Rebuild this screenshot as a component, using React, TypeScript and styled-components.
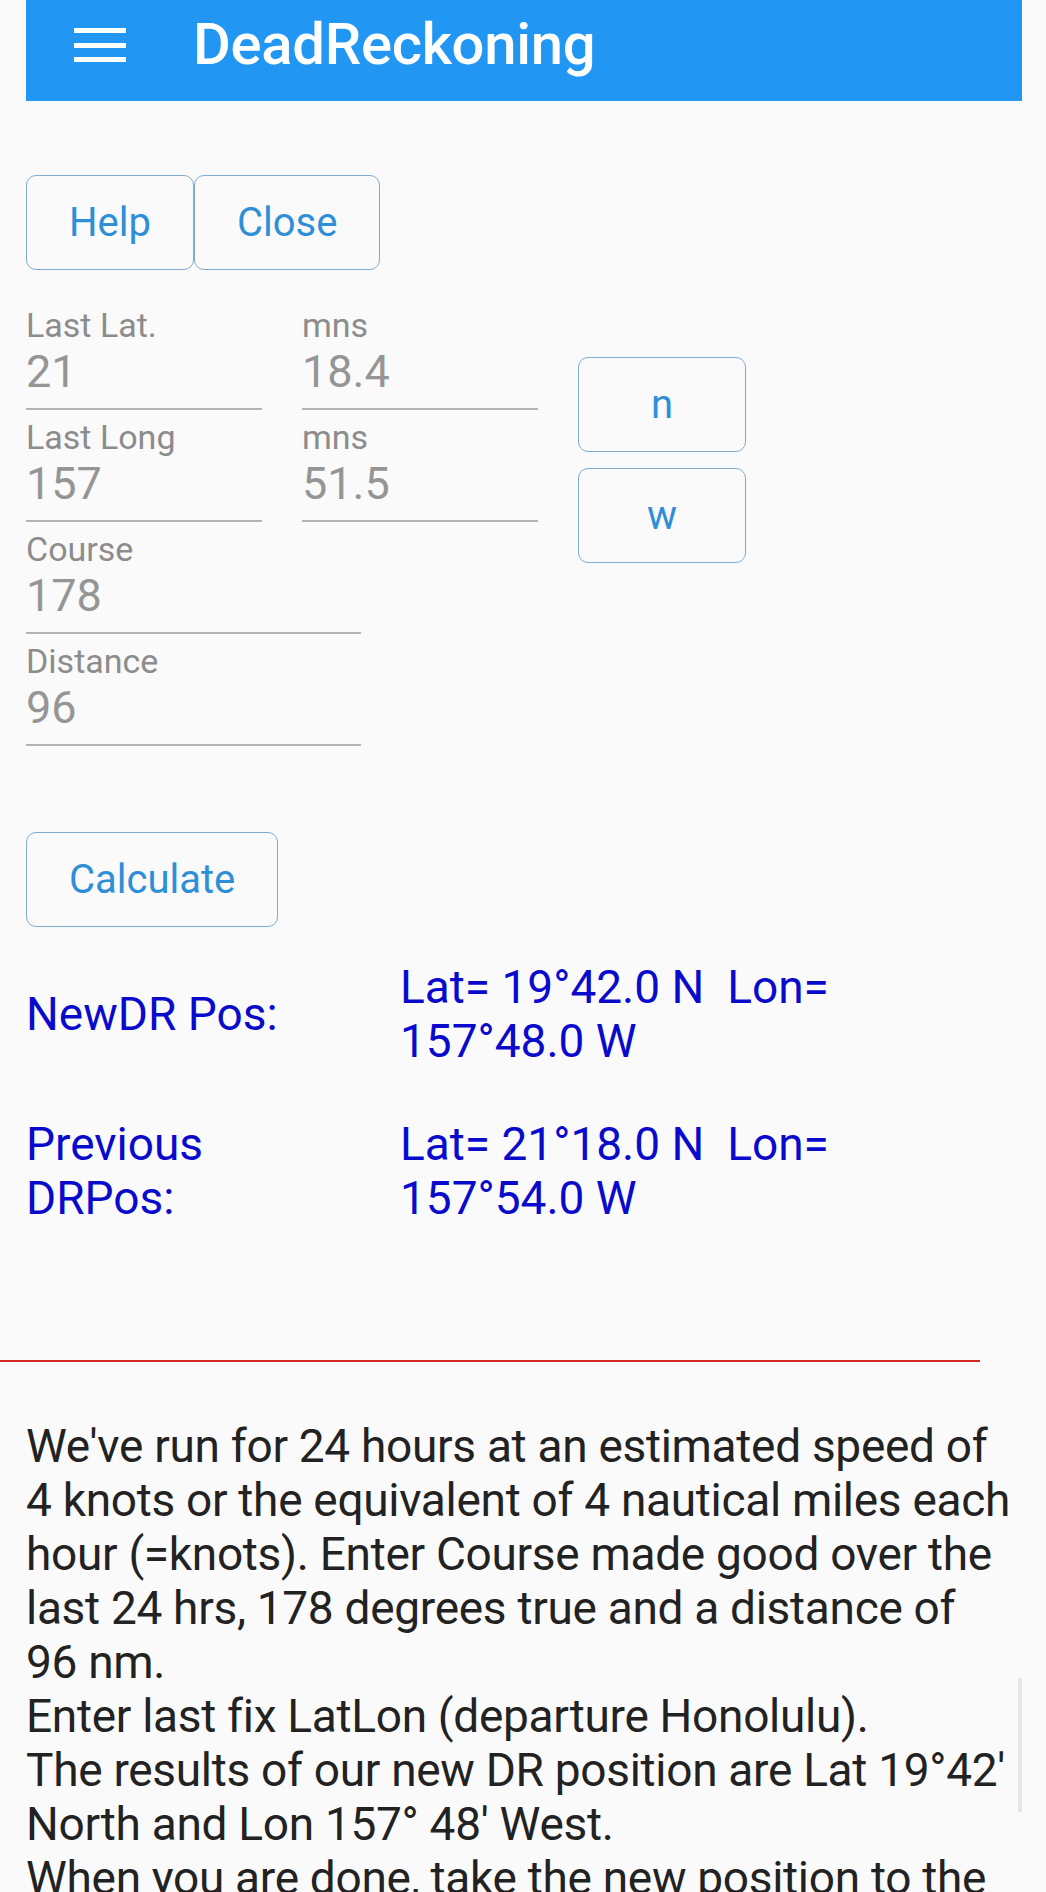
import React from "react";
import styled, { createGlobalStyle } from "styled-components";

const GlobalStyle = createGlobalStyle`
  html, body {
    margin: 0;
    padding: 0;
    background: #fafafa;
  }
  * {
    box-sizing: border-box;
  }
`;

export const Screen = styled.div`
  position: relative;
  height: 100vh;
  overflow: hidden;
  padding: 0 24px 0 26px;
  font-family: Roboto, "Noto Sans", sans-serif;
  background: #fafafa;
`;

export const AppBar = styled.header`
  display: flex;
  align-items: flex-start;
  height: 101px;
  background: #2196f3;
  padding-left: 48px;
`;

export const MenuIcon = styled.div`
  display: flex;
  flex-direction: column;
  gap: 9.5px;
  margin-top: 28px;
  width: 52px;

  span {
    display: block;
    height: 5px;
    background: #ffffff;
  }
`;

export const Title = styled.h1`
  margin: 10px 0 0 67px;
  font-size: 58px;
  font-weight: 500;
  line-height: normal;
  color: #ffffff;
  letter-spacing: -0.3px;
`;

export const ButtonRow = styled.div`
  display: flex;
  margin-top: 74px;
`;

export const OutlineButton = styled.button<{ $width?: number }>`
  height: 95px;
  width: ${({ $width }) => ($width ? `${$width}px` : "auto")};
  padding: 0 42px;
  border: 1.5px solid #7fabcf;
  border-radius: 10px;
  background: transparent;
  font-family: Roboto, sans-serif;
  font-size: 40px;
  color: #2f8fd6;
  cursor: pointer;
`;

export const FormArea = styled.div`
  display: flex;
  gap: 40px;
  margin-top: 37px;
`;

export const FieldsColumn = styled.div`
  display: flex;
  flex-direction: column;
`;

export const FieldRow = styled.div`
  display: flex;
  gap: 40px;
`;

export const Field = styled.div<{ $width: number }>`
  width: ${({ $width }) => $width}px;
  padding-bottom: 10px;
  border-bottom: 2px solid #b3b3b3;
  margin-bottom: 9px;
`;

export const FieldLabel = styled.div`
  font-size: 34px;
  line-height: 37px;
  color: #8c8c8c;
`;

export const FieldValue = styled.div`
  margin-top: 1px;
  font-size: 45px;
  line-height: 53px;
  color: #959595;
`;

export const HemiColumn = styled.div`
  display: flex;
  flex-direction: column;
  gap: 16px;
  margin-top: 50px;
`;

export const CalcRow = styled.div`
  margin-top: 77px;
`;

export const Results = styled.div`
  display: grid;
  grid-template-columns: 300px 470px;
  column-gap: 74px;
  row-gap: 49px;
  align-items: center;
  margin-top: 33px;
  font-size: 46px;
  line-height: normal;
  color: #0a0acd;
`;

export const Divider = styled.hr`
  margin: 135px 0 0 -26px;
  width: 980px;
  height: 2px;
  border: none;
  background: #d42424;
`;

export const HelpText = styled.p`
  margin: 57px 8px 0 0;
  font-size: 46px;
  line-height: normal;
  letter-spacing: -0.3px;
  color: #222222;
`;

export const ScrollThumb = styled.div`
  position: absolute;
  right: 24px;
  top: 1678px;
  width: 4px;
  height: 134px;
  background: #e6e6e6;
`;

const App = () => {
  return (
    <>
      <GlobalStyle />
      <Screen>
        <AppBar>
          <MenuIcon>
            <span />
            <span />
            <span />
          </MenuIcon>
          <Title>DeadReckoning</Title>
        </AppBar>

        <ButtonRow>
          <OutlineButton>Help</OutlineButton>
          <OutlineButton>Close</OutlineButton>
        </ButtonRow>

        <FormArea>
          <FieldsColumn>
            <FieldRow>
              <Field $width={236}>
                <FieldLabel>Last Lat.</FieldLabel>
                <FieldValue>21</FieldValue>
              </Field>
              <Field $width={236}>
                <FieldLabel>mns</FieldLabel>
                <FieldValue>18.4</FieldValue>
              </Field>
            </FieldRow>
            <FieldRow>
              <Field $width={236}>
                <FieldLabel>Last Long</FieldLabel>
                <FieldValue>157</FieldValue>
              </Field>
              <Field $width={236}>
                <FieldLabel>mns</FieldLabel>
                <FieldValue>51.5</FieldValue>
              </Field>
            </FieldRow>
            <Field $width={335}>
              <FieldLabel>Course</FieldLabel>
              <FieldValue>178</FieldValue>
            </Field>
            <Field $width={335}>
              <FieldLabel>Distance</FieldLabel>
              <FieldValue>96</FieldValue>
            </Field>
          </FieldsColumn>
          <HemiColumn>
            <OutlineButton $width={168}>n</OutlineButton>
            <OutlineButton $width={168}>w</OutlineButton>
          </HemiColumn>
        </FormArea>

        <CalcRow>
          <OutlineButton>Calculate</OutlineButton>
        </CalcRow>

        <Results>
          <div>NewDR Pos:</div>
          <div>Lat= 19°42.0 N{"\u00a0 "}Lon= 157°48.0 W</div>
          <div>Previous DRPos:</div>
          <div>Lat= 21°18.0 N{"\u00a0 "}Lon= 157°54.0 W</div>
        </Results>

        <Divider />

        <HelpText>
          We've run for 24 hours at an estimated speed of 4 knots or the
          equivalent of 4 nautical miles each hour (=knots). Enter Course made
          good over the last 24 hrs, 178 degrees true and a distance of 96 nm.
          <br />
          Enter last fix LatLon (departure Honolulu).
          <br />
          The results of our new DR position are Lat 19°42' North and Lon 157°
          48' West.
          <br />
          When you are done, take the new position to the chart and plot it.
        </HelpText>

        <ScrollThumb />
      </Screen>
    </>
  );
};

export default App;
